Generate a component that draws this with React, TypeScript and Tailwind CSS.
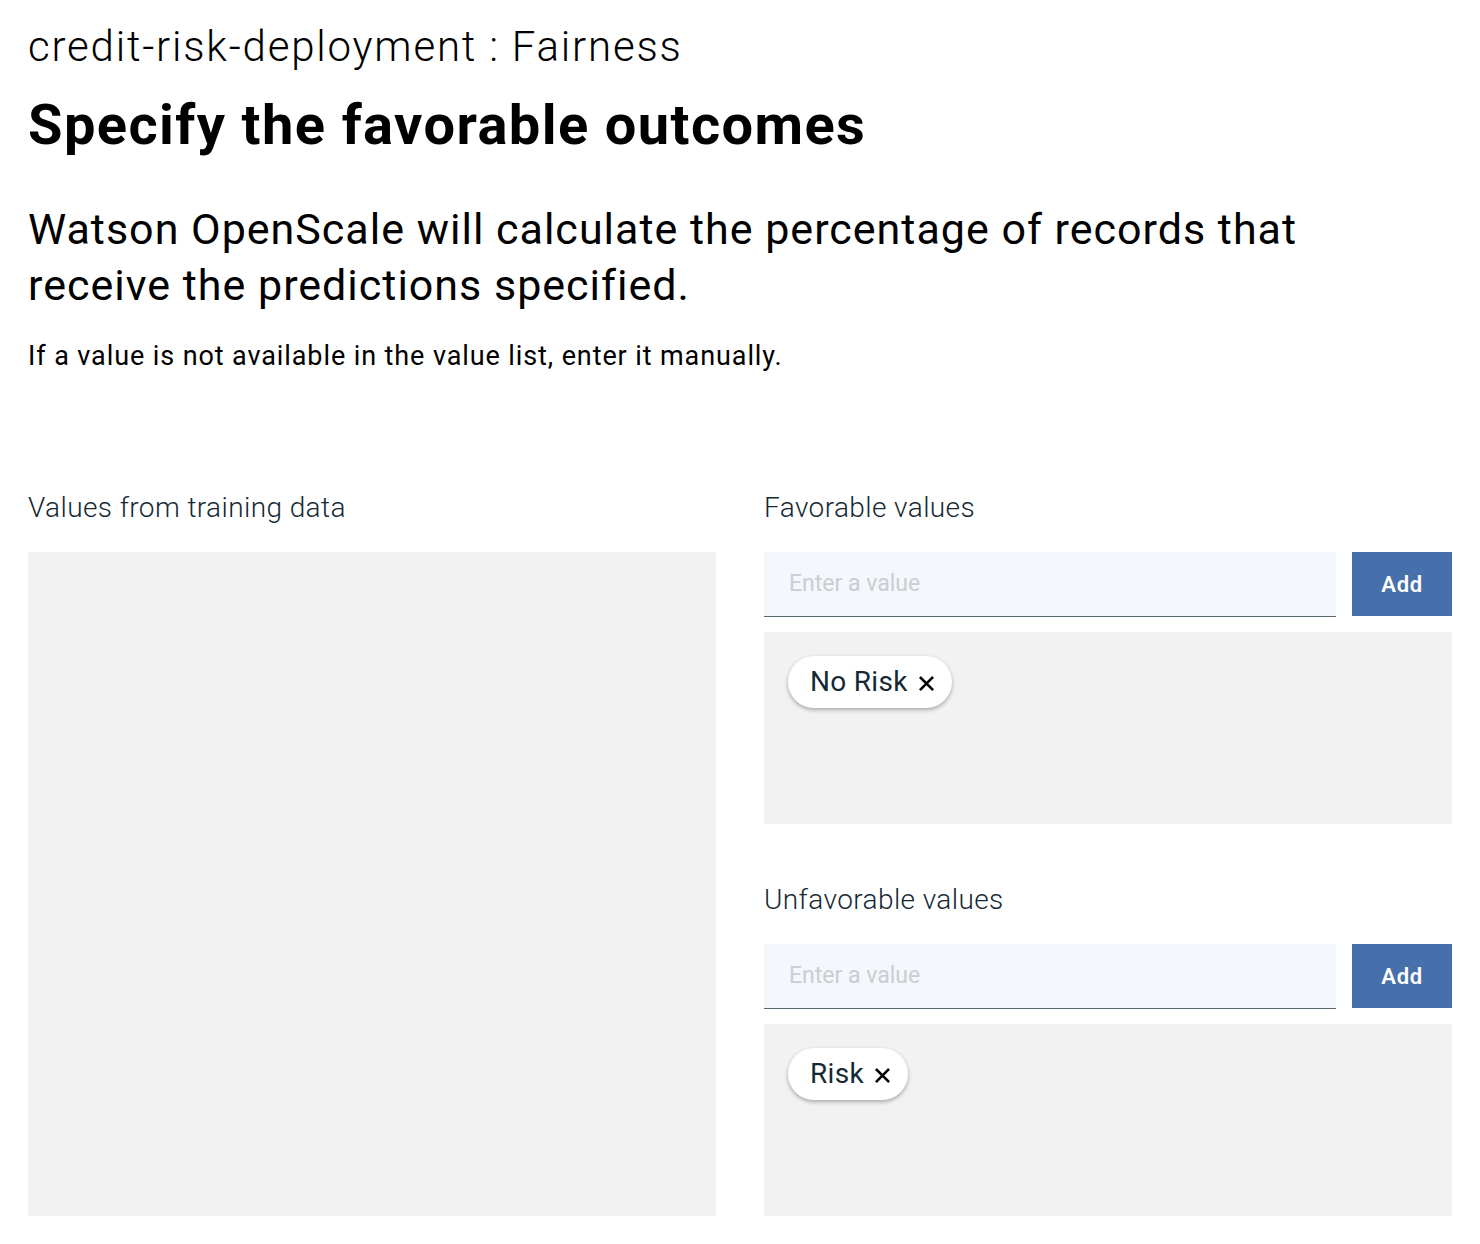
import React from "react";

function Chip({ label }: { label: string }) {
  return (
    <div className="inline-flex h-[52px] items-center gap-[11px] rounded-full bg-white pl-[22px] pr-[18px] shadow-[0_2px_4px_rgba(0,0,0,0.3)]">
      <span className="text-[28px] leading-none tracking-[0.3px] text-[#152935]">{label}</span>
      <svg width="15" height="15" viewBox="0 0 16 16" className="mt-[3px]">
        <path d="M2 2 L14 14 M14 2 L2 14" stroke="#000" strokeWidth="2.8" strokeLinecap="square" />
      </svg>
    </div>
  );
}

function ValueSection({ title, chip, className }: { title: string; chip: string; className?: string }) {
  return (
    <div className={className}>
      <div className="h-[32px] text-[28px] font-light leading-[32px] tracking-[0.4px] text-[#152935]">{title}</div>
      <div className="mt-[28px] flex gap-[16px]">
        <div className="flex h-[65px] flex-1 items-center border-b border-[#5a6872] bg-[#f4f7fb] px-[25px]">
          <span className="text-[23px] text-[#c9ced3]">Enter a value</span>
        </div>
        <button className="h-[64px] w-[100px] bg-[#4670ac] text-[22px] font-semibold tracking-[0.6px] text-white">Add</button>
      </div>
      <div className="mt-[15px] h-[192px] bg-[#f2f2f2] p-[24px]">
        <Chip label={chip} />
      </div>
    </div>
  );
}

export default function App() {
  return (
    <div className="min-h-[1244px] bg-white px-[28px] pt-[22px] text-black" style={{ fontFamily: "Roboto, 'Noto Sans', sans-serif" }}>
      <div className="text-[42px] font-light leading-[50px] tracking-[1.8px]">credit-risk-deployment : Fairness</div>
      <div className="mt-[23px] text-[56px] font-bold leading-[60px] tracking-[1.4px]">Specify the favorable outcomes</div>
      <div className="mt-[46px] text-[43px] leading-[56px] tracking-[1px]">
        Watson OpenScale will calculate the percentage of records that
        <br />
        receive the predictions specified.
      </div>
      <div className="mt-[27px] text-[27px] leading-[32px] tracking-[0.9px]">If a value is not available in the value list, enter it manually.</div>
      <div className="mt-[120px] flex gap-[48px]">
        <div className="w-[688px]">
          <div className="h-[32px] text-[28px] font-light leading-[32px] tracking-[0.4px] text-[#152935]">Values from training data</div>
          <div className="mt-[28px] h-[664px] bg-[#f2f2f2]" />
        </div>
        <div className="w-[688px]">
          <ValueSection title="Favorable values" chip="No Risk" />
          <ValueSection title="Unfavorable values" chip="Risk" className="mt-[60px]" />
        </div>
      </div>
    </div>
  );
}
